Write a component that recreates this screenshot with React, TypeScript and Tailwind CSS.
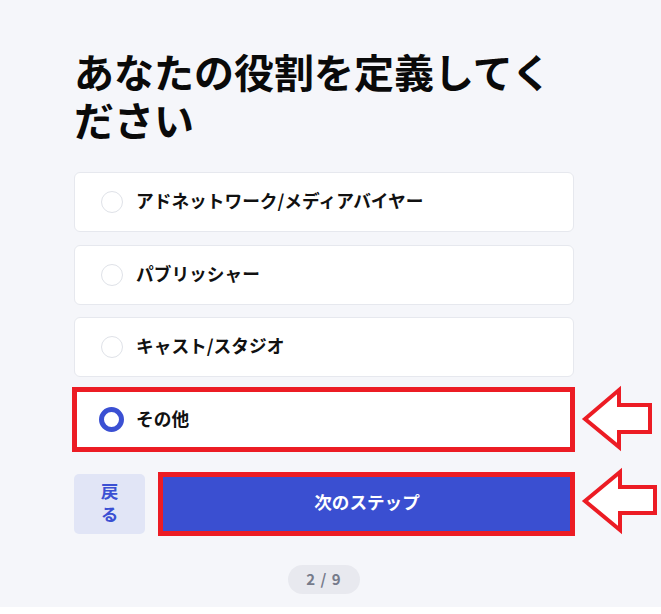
import React from "react";

const font = { fontFamily: '"Noto Sans CJK JP", "Noto Sans", sans-serif' };

const options = [
  "アドネットワーク/メディアバイヤー",
  "パブリッシャー",
  "キャスト/スタジオ",
  "その他",
];

export default function App() {
  const selected = 3;
  return (
    <div className="relative bg-[#f5f6fa] h-[607px] w-full" style={font}>
      <div className="w-[500px] ml-[74px] pt-[47px] pb-[13px] flex flex-col">
        <h1 className="text-[40px] leading-[48px] font-bold text-[#0a0a0a] mb-[29px]">
          あなたの役割を定義してください
        </h1>
        <div className="flex flex-col gap-[12.5px]">
          {options.map((o, i) => (
            <div
              key={o}
              className="relative h-[60px] bg-white border border-[#e6e8ee] rounded-[6px] pl-[24px] flex items-center gap-3"
            >
              <div className="w-[25px] h-[25px] flex items-center justify-center shrink-0">
                {i === selected ? (
                  <div className="w-[25px] h-[25px] rounded-full border-[5px] border-[#3b50d3] bg-white" />
                ) : (
                  <div className="w-[22px] h-[22px] rounded-full border border-[#dfe2e8] bg-white" />
                )}
              </div>
              <span className="text-[17.7px] font-bold text-[#111] leading-[22px] pb-[4px]">{o}</span>
              {i === selected && (
                <div className="absolute -left-[3px] -right-[2px] -top-[4px] -bottom-[3px] border-[5px] border-[#ec1c24] pointer-events-none" />
              )}
            </div>
          ))}
        </div>
        <div className="mt-[24.5px] flex gap-[15px] h-[60px]">
          <button className="w-[71px] h-[60px] shrink-0 rounded-[5px] bg-[#e1e5f6] text-[#3b50d3] text-[17.6px] font-bold leading-[23px] px-[18px] pb-[4px]">
            戻る
          </button>
          <div className="relative flex-1">
            <button className="w-full h-[60px] bg-[#3a4fd1] text-white text-[17.6px] font-bold pb-[4px]">
              次のステップ
            </button>
            <div className="absolute -left-[2px] -right-[1px] -top-[2px] -bottom-[2px] border-[5px] border-[#ec1c24] pointer-events-none" />
          </div>
        </div>
        <div className="mt-[31px] flex justify-center">
          <div className="w-[72px] h-[29px] rounded-full bg-[#e8e9ef] text-[#767b8b] text-[15px] font-bold flex items-center justify-center tracking-[1px] pb-[1px]">
            2 / 9
          </div>
        </div>
      </div>
      <svg
        className="absolute left-0 top-0 pointer-events-none"
        width="661"
        height="614"
        viewBox="0 0 661 614"
      >
        <path
          d="M585 419 L619 390 L619 405 L650 405 L650 432 L619 432 L619 447 Z"
          fill="white"
          stroke="#ec1c24"
          strokeWidth="4"
          strokeLinejoin="miter"
        />
        <path
          d="M585 501 L620 472 L620 487 L655 487 L655 513 L620 513 L620 530 Z"
          fill="white"
          stroke="#ec1c24"
          strokeWidth="4"
          strokeLinejoin="miter"
        />
      </svg>
    </div>
  );
}
